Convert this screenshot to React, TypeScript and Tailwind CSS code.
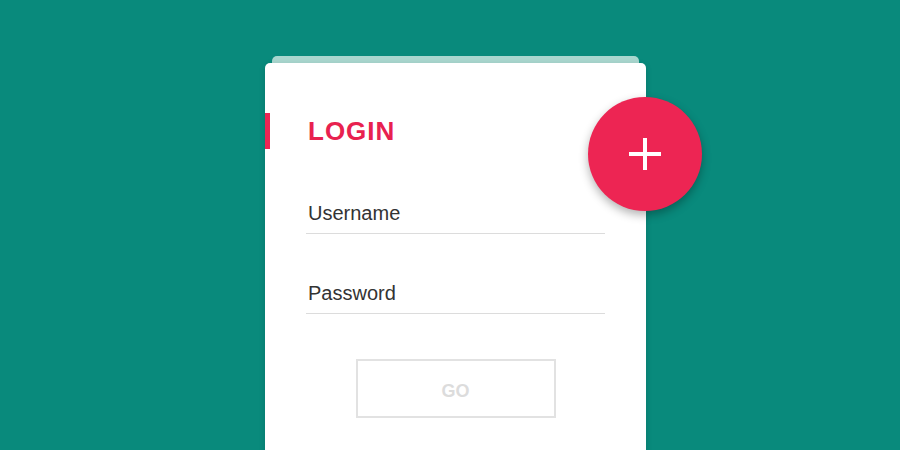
const font = { fontFamily: '"Liberation Sans", Arial, sans-serif' };

function Field({ label }: { label: string }) {
  return (
    <div className="mx-[41px] border-b border-[#dcdcdc] pb-[8px]">
      <input
        type="text"
        placeholder={label}
        className="block w-full bg-transparent pl-[2px] text-[20px] leading-[24px] text-[#333] outline-none placeholder:text-[#333]"
      />
    </div>
  );
}

export default function App() {
  return (
    <div
      className="h-[450px] w-[900px] overflow-hidden bg-[#098a7c] pt-[56px] pl-[265px]"
      style={font}
    >
      <div className="w-[381px]">
        <div className="mx-[7px] h-[7px] rounded-t-[5px] bg-[#a9d7cf]" />
        <div className="relative h-[420px] rounded-[5px] bg-white pt-[50px] shadow-[0_2px_6px_rgba(0,0,0,0.15)]">
          <div className="flex h-[36px] items-center border-l-[5px] border-[#ed2553] pl-[38px]">
            <h1 className="text-[26px] font-bold tracking-[1px] text-[#e8214f]">LOGIN</h1>
          </div>

          <div className="mt-[52px]">
            <Field label="Username" />
          </div>
          <div className="mt-[47px]">
            <Field label="Password" />
          </div>

          <div className="mt-[45px] flex justify-center">
            <button className="h-[59px] w-[200px] border-2 border-[#e2e2e2] bg-white pt-[5px] text-[18px] font-bold text-[#dcdcdc]">
              GO
            </button>
          </div>

          <button className="absolute top-[34px] left-[323px] flex h-[114px] w-[114px] items-center justify-center rounded-full bg-[#ed2553] shadow-[0_4px_10px_rgba(0,0,0,0.3)]">
            <svg width="34" height="34" viewBox="0 0 34 34">
              <path d="M17 1v32M1 17h32" stroke="white" strokeWidth="4" />
            </svg>
          </button>
        </div>
      </div>
    </div>
  );
}
